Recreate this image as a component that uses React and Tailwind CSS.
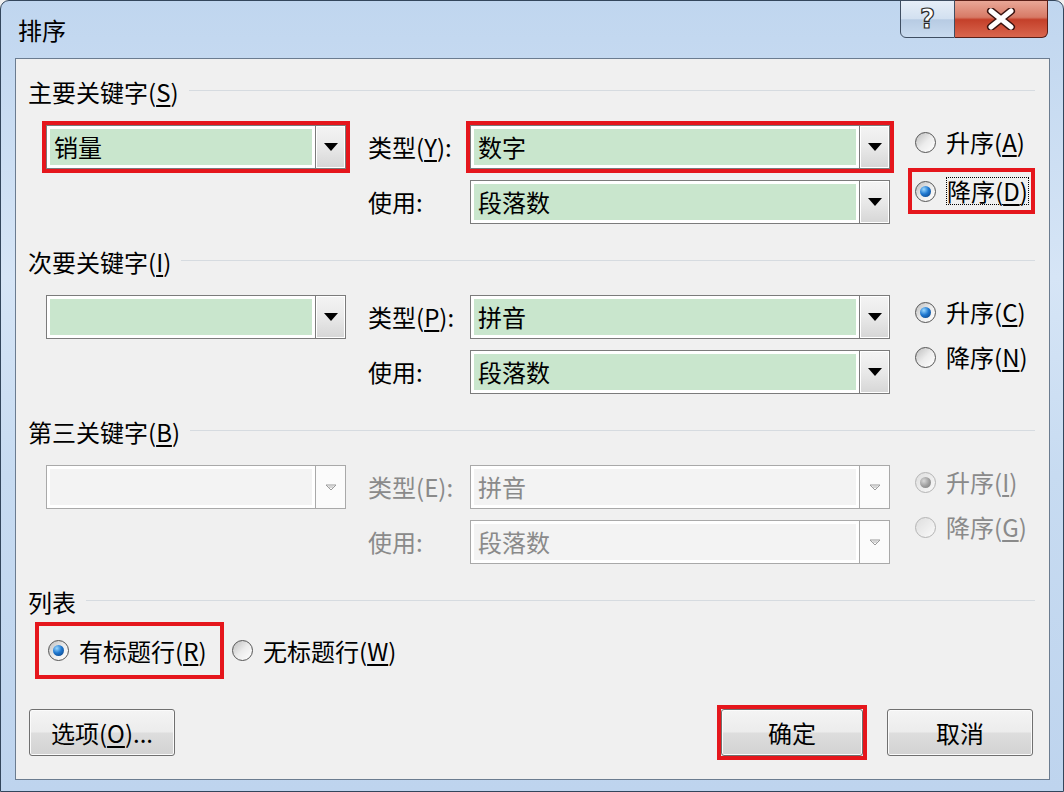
import React from 'react'

const font = "font-['Noto_Sans_CJK_SC','Liberation_Sans',sans-serif]"

function Arrow({ disabled }) {
  if (disabled) {
    return (
      <svg width="14" height="9" viewBox="0 0 14 9">
        <path d="M2 2 L12 2 L7 7 Z" fill="none" stroke="#9a9a9a" strokeWidth="1" />
        <path d="M4.5 4 L9.5 4" stroke="#b0b0b0" strokeWidth="1" />
      </svg>
    )
  }
  return (
    <svg width="14" height="8" viewBox="0 0 14 8">
      <path d="M0 0 L14 0 L7 8 Z" fill="#000" />
    </svg>
  )
}

function Combo({ value, w, disabled, red }) {
  return (
    <div
      className={`flex h-[44px] shrink-0 bg-white border ${w} ${
        disabled ? 'border-[#a9a9a9]' : 'border-[#7b7b7b]'
      } ${red ? 'outline-4 outline-[#e5161c]' : ''}`}
    >
      <div className="flex-1 p-[3px]">
        <div
          className={`h-full flex items-center pl-[4px] text-[24px] leading-[30px] ${
            disabled ? 'bg-[#f3f3f3] text-[#8a8a8a]' : 'bg-[#c9e6cd] text-black'
          }`}
        >
          {value}
        </div>
      </div>
      <div
        className={`w-[30px] flex items-center justify-center border-l ${
          disabled
            ? 'border-[#a9a9a9] bg-[#fbfbfb]'
            : 'border-[#7b7b7b] bg-gradient-to-b from-[#f4f4f4] via-[#e9e9e9] to-[#d6d6d6] shadow-[inset_0_0_0_1px_#ffffff]'
        }`}
      >
        <Arrow disabled={disabled} />
      </div>
    </div>
  )
}

function RadioDot({ checked, disabled }) {
  return (
    <div
      className={`w-[21px] h-[21px] shrink-0 rounded-full border flex items-center justify-center ${
        disabled
          ? 'border-[#b4b4b4] bg-gradient-to-br from-[#dedede] to-[#fafafa]'
          : 'border-[#555555] bg-gradient-to-br from-[#bdbdbd] via-[#ececec] to-white'
      }`}
    >
      {checked && (
        <div
          className={`w-[11px] h-[11px] rounded-full ${
            disabled
              ? 'bg-[radial-gradient(circle_at_35%_35%,#d8d8d8,#9b9b9b_55%,#7d7d7d)]'
              : 'bg-[radial-gradient(circle_at_35%_30%,#9ad8ff,#1f78d0_45%,#0a3a78)]'
          }`}
        />
      )}
    </div>
  )
}

function Radio({ checked, disabled, text, k, focus, className = '' }) {
  return (
    <div className={`flex items-center h-[30px] ${className}`}>
      <RadioDot checked={checked} disabled={disabled} />
      <span
        className={`ml-[10px] text-[24px] leading-[28px] whitespace-nowrap ${
          disabled ? 'text-[#8a8a8a]' : 'text-black'
        } ${focus ? 'outline-1 outline-dotted outline-black -outline-offset-1 px-[1px]' : ''}`}
      >
        {text}(<u className="underline-offset-[3px]">{k}</u>)
      </span>
    </div>
  )
}

function Header({ text, k }) {
  return (
    <div className="flex items-center h-[30px] pl-[12px] pr-[14px]">
      <span className="text-[24px] leading-[30px] text-black whitespace-nowrap">
        {text}(<u className="underline-offset-[3px]">{k}</u>)
      </span>
      <div className="flex-1 h-px bg-[#d6dbe0] ml-[10px] -mt-[4px]" />
    </div>
  )
}

function Label({ children, disabled }) {
  return (
    <div
      className={`w-[102px] shrink-0 text-[24px] leading-[30px] whitespace-nowrap ${
        disabled ? 'text-[#8a8a8a]' : 'text-black'
      }`}
    >
      {children}
    </div>
  )
}

function Section({ title, k, key1, typeLabel, typeKey, type, use, radios, disabled, red1, red2 }) {
  return (
    <div className="h-[170px]">
      <Header text={title} k={k} />
      <div className="flex items-start mt-[18px] pl-[30px]">
        <Combo value={key1} w="w-[300px]" disabled={disabled} red={red1} />
        <div className="ml-[22px] flex flex-col gap-[11px]">
          <div className="flex items-center">
            <Label disabled={disabled}>
              {typeLabel}(<u className={disabled ? 'no-underline' : 'underline-offset-[3px]'}>{typeKey}</u>):
            </Label>
            <Combo value={type} w="w-[420px]" disabled={disabled} red={red2} />
          </div>
          <div className="flex items-center">
            <Label disabled={disabled}>使用:</Label>
            <Combo value={use} w="w-[420px]" disabled={disabled} />
          </div>
        </div>
        <div className="ml-[25px] pt-[2px] flex flex-col gap-[15px]">{radios}</div>
      </div>
    </div>
  )
}

function Button({ children, w }) {
  return (
    <div
      className={`${w} h-[47px] rounded-[3px] border border-[#707070] bg-[linear-gradient(#f4f4f4_0%,#ececec_48%,#dddddd_52%,#d2d2d2_100%)] shadow-[inset_0_0_0_1px_#fbfbfb] flex items-center justify-center text-[24px] leading-[30px] text-black`}
    >
      {children}
    </div>
  )
}

export default function App() {
  return (
    <div className={`w-[1064px] h-[792px] overflow-hidden bg-[#f0f0f0] ${font}`}>
      <div className="w-[1064px] h-[792px] flex flex-col rounded-t-[9px] border border-[#33465c] bg-[linear-gradient(180deg,#c0d6ef_0%,#d6e5f6_35%,#c7dbf1_60%,#bed4ee_100%)]">
        {/* title bar */}
        <div className="h-[57px] flex items-start shrink-0">
          <div className="pl-[17px] pt-[14px] text-[24px] leading-[30px] text-black">排序</div>
          <div className="ml-auto mr-[15px] flex h-[38px] -mt-px">
            <div className="w-[55px] h-full rounded-bl-[6px] border border-[#3f4e62] bg-[linear-gradient(#e6eef8_0%,#d2e0f0_50%,#b7cbe3_52%,#c9dbef_100%)] flex items-center justify-center">
              <span className="text-[26px] leading-none font-bold text-white [-webkit-text-stroke:1.2px_#2a2a2a] font-['DejaVu_Sans',sans-serif]">?</span>
            </div>
            <div className="w-[93px] h-full rounded-br-[6px] border border-l-0 border-[#5a1f18] bg-[linear-gradient(#e9a797_0%,#d77a66_45%,#c4402a_52%,#d9664e_100%)] flex items-center justify-center">
              <svg width="30" height="22" viewBox="0 0 30 22">
                <path d="M5 3 L25 19 M25 3 L5 19" stroke="#3b1410" strokeWidth="8" strokeLinecap="round" />
                <path d="M5 3 L25 19 M25 3 L5 19" stroke="#ffffff" strokeWidth="5" strokeLinecap="round" />
              </svg>
            </div>
          </div>
        </div>

        {/* client area */}
        <div className="ml-[14px] mr-[13px] h-[722px] shrink-0 border border-[#6b7c90] bg-[#f0f0f0] pt-[18px]">
          <Section
            title="主要关键字"
            k="S"
            key1="销量"
            typeLabel="类型"
            typeKey="Y"
            type="数字"
            use="段落数"
            red1
            red2
            radios={
              <>
                <Radio text="升序" k="A" />
                <div className="-ml-[7px] -mt-[4px] -mb-[4px] w-[127px] border-4 border-[#e5161c] pl-[3px] py-[4px]">
                  <Radio text="降序" k="D" checked focus className="h-[30px]" />
                </div>
              </>
            }
          />
          <Section
            title="次要关键字"
            k="I"
            key1=""
            typeLabel="类型"
            typeKey="P"
            type="拼音"
            use="段落数"
            radios={
              <>
                <Radio text="升序" k="C" checked />
                <Radio text="降序" k="N" />
              </>
            }
          />
          <Section
            title="第三关键字"
            k="B"
            key1=""
            typeLabel="类型"
            typeKey="E"
            type="拼音"
            use="段落数"
            disabled
            radios={
              <>
                <Radio text="升序" k="I" checked disabled />
                <Radio text="降序" k="G" disabled />
              </>
            }
          />

          {/* list */}
          <div>
            <div className="flex items-center h-[30px] pl-[12px] pr-[14px]">
              <span className="text-[24px] leading-[30px] text-black">列表</span>
              <div className="flex-1 h-px bg-[#d6dbe0] ml-[10px] -mt-[4px]" />
            </div>
            <div className="flex items-center mt-[5px] ml-[19px]">
              <div className="w-[189px] h-[57px] border-4 border-[#e5161c] flex items-center pl-[9px]">
                <Radio text="有标题行" k="R" checked />
              </div>
              <Radio text="无标题行" k="W" className="ml-[8px]" />
            </div>
          </div>

          {/* buttons */}
          <div className="flex items-start mt-[30px] pl-[13px] pr-[16px]">
            <Button w="w-[146px]">
              选项(<u className="underline-offset-[3px]">O</u>)...
            </Button>
            <div className="ml-auto -mt-[4px] border-4 border-[#e5161c]">
              <Button w="w-[142px]">确定</Button>
            </div>
            <div className="ml-[20px]">
              <Button w="w-[146px]">取消</Button>
            </div>
          </div>
        </div>
      </div>
    </div>
  )
}
